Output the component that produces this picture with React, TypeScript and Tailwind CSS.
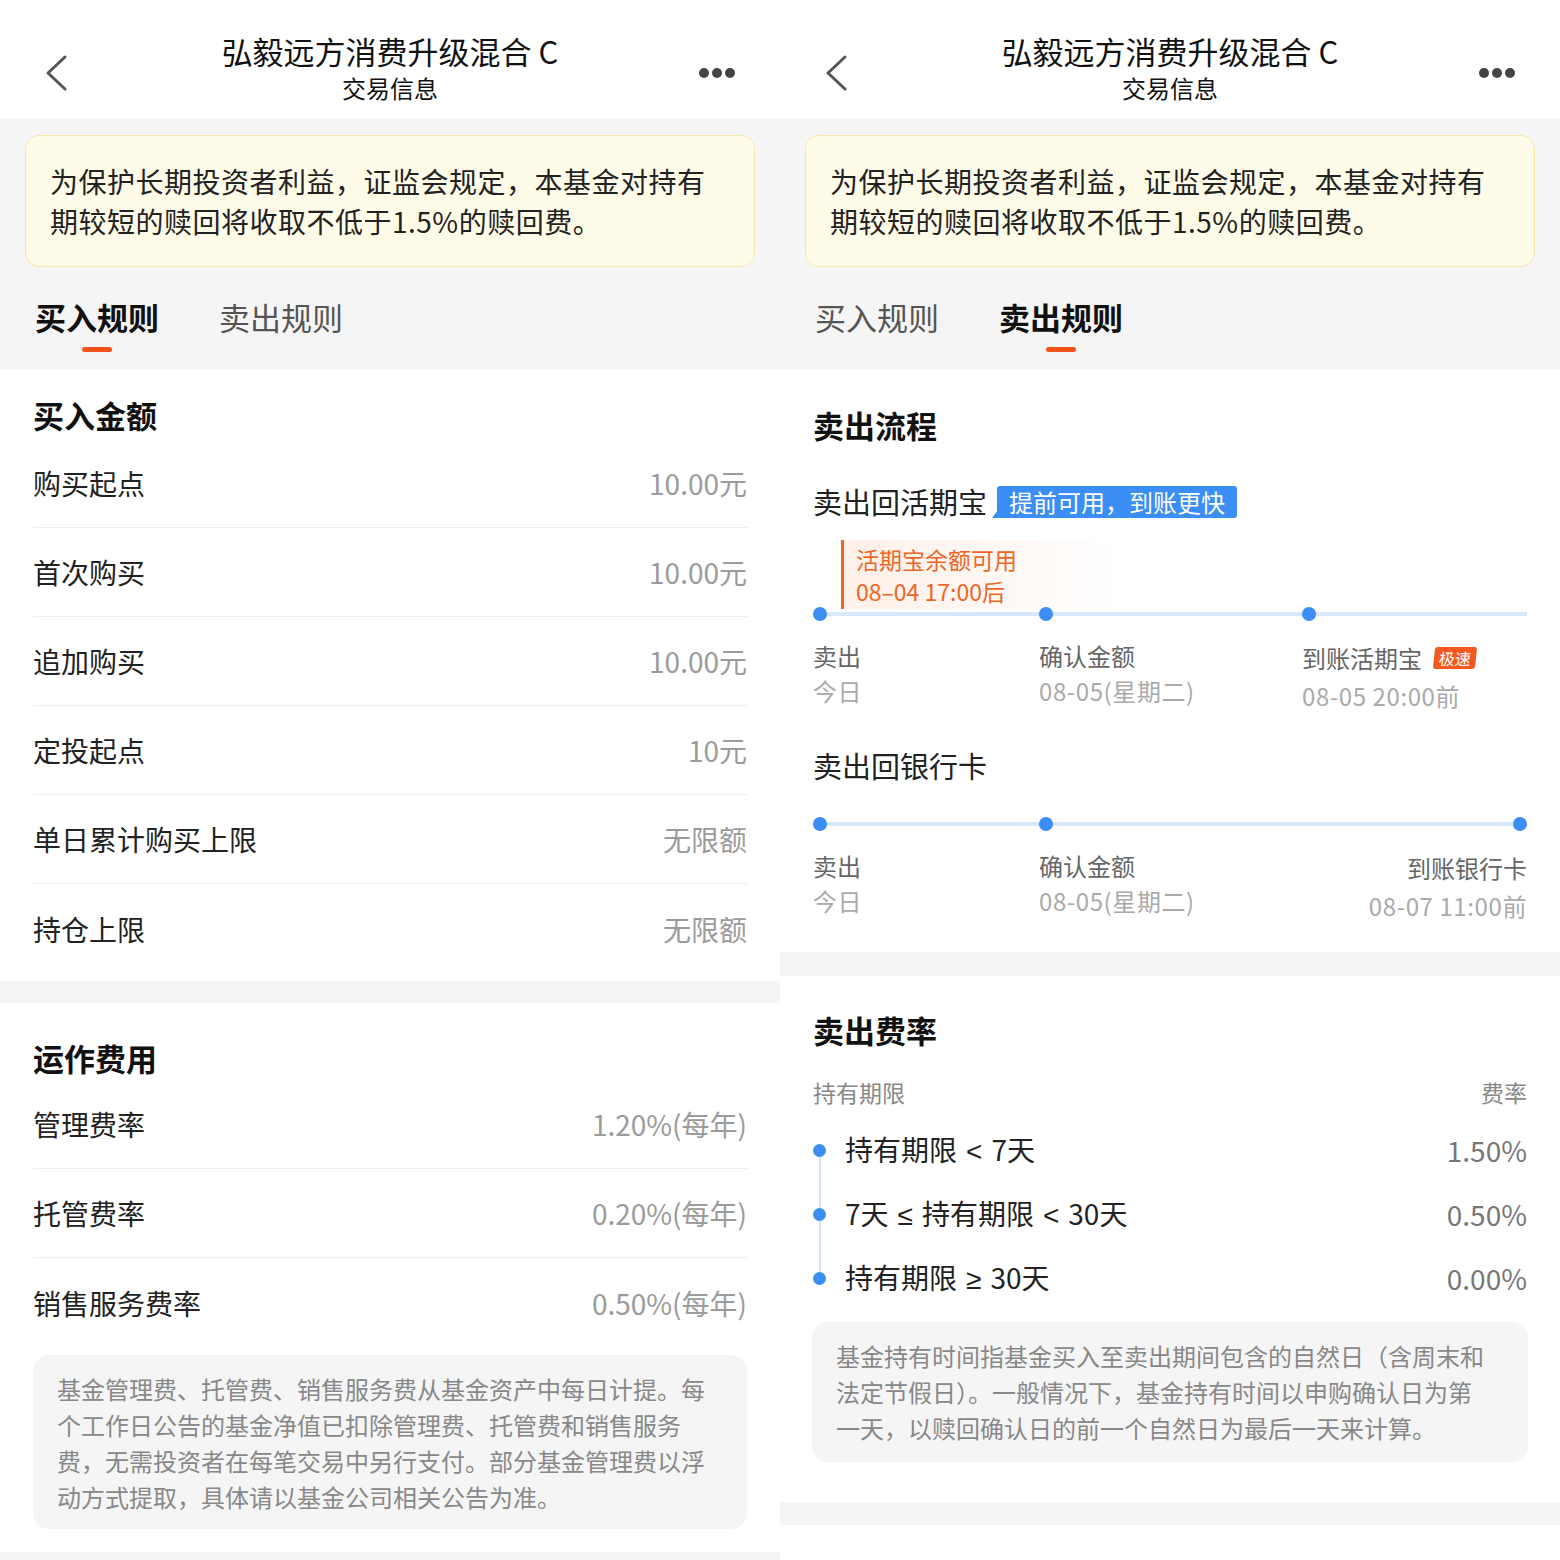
import React from 'react';

const FONT = "font-['Noto_Sans_CJK_SC','Noto_Sans',sans-serif]";

function Header() {
  return (
    <div className="flex h-[118px] bg-white">
      <div className="w-[120px] pl-[44px] pt-[53px]">
        <svg width="26" height="40" viewBox="0 0 26 40">
          <path d="M21 4 L4 20 L21 36" stroke="#555" strokeWidth="3" fill="none" strokeLinecap="round" strokeLinejoin="round" />
        </svg>
      </div>
      <div className="flex flex-1 flex-col items-center pt-[32px] text-[#111]">
        <div className="text-[31px] leading-[38px]">弘毅远方消费升级混合 C</div>
        <div className="text-[24px] leading-[36px]">交易信息</div>
      </div>
      <div className="flex w-[120px] gap-[3px] pl-[39px] pt-[68px]">
        <span className="h-[10px] w-[10px] rounded-full bg-[#444]" />
        <span className="h-[10px] w-[10px] rounded-full bg-[#444]" />
        <span className="h-[10px] w-[10px] rounded-full bg-[#444]" />
      </div>
    </div>
  );
}

function Tab({ label, active }: { label: string; active?: boolean }) {
  return (
    <div className="flex flex-col items-center">
      <div className={`text-[31px] leading-[40px] ${active ? 'font-bold text-[#111]' : 'text-[#555]'}`}>{label}</div>
      <div className={`mt-[10px] h-[5px] w-[30px] rounded-full ${active ? 'bg-[#f2531c]' : 'bg-transparent'}`} />
    </div>
  );
}

function TopArea({ sell }: { sell?: boolean }) {
  return (
    <div className="bg-[#f5f5f5] px-[25px] pt-[17px]">
      <div className="rounded-[14px] border-[1.5px] border-[#f6e6ab] bg-[#fffbe9] py-[25px] pl-[24px] pr-[16px] text-[28px] leading-[40px] tracking-[0.5px] text-[#222]">
        为保护长期投资者利益，证监会规定，本基金对持有
        <br />
        期较短的赎回将收取不低于1.5%的赎回费。
      </div>
      <div className="flex gap-[60px] pb-[18px] pl-[10px] pt-[30px]">
        <Tab label="买入规则" active={!sell} />
        <Tab label="卖出规则" active={sell} />
      </div>
    </div>
  );
}

function Row({ label, value, last }: { label: string; value: string; last?: boolean }) {
  return (
    <div className={`flex h-[89px] items-center justify-between ${last ? '' : 'border-b border-[#eeeeee]'}`}>
      <span className="text-[28px] text-[#222]">{label}</span>
      <span className="text-[28px] text-[#9b9b9b]">{value}</span>
    </div>
  );
}

const buyRows = [
  ['购买起点', '10.00元'],
  ['首次购买', '10.00元'],
  ['追加购买', '10.00元'],
  ['定投起点', '10元'],
  ['单日累计购买上限', '无限额'],
  ['持仓上限', '无限额'],
];

const feeRows = [
  ['管理费率', '1.20%(每年)'],
  ['托管费率', '0.20%(每年)'],
  ['销售服务费率', '0.50%(每年)'],
];

function BuyPanel() {
  return (
    <div className="flex h-[1560px] w-[780px] flex-col overflow-hidden bg-white">
      <Header />
      <TopArea />
      <div className="px-[33px] pb-[8px] pt-[25px]">
        <div className="text-[31px] font-bold leading-[40px] text-[#111]">买入金额</div>
        <div className="mt-[4px]">
          {buyRows.map(([l, v], i) => (
            <Row key={l} label={l} value={v} last={i === buyRows.length - 1} />
          ))}
        </div>
      </div>
      <div className="h-[22px] bg-[#f5f5f5]" />
      <div className="px-[33px] pt-[35px]">
        <div className="text-[31px] font-bold leading-[40px] text-[#111]">运作费用</div>
        <div className="mt-[2px]">
          {feeRows.map(([l, v], i) => (
            <Row key={l} label={l} value={v} last={i === feeRows.length - 1} />
          ))}
        </div>
        <div className="mt-[8px] rounded-[16px] bg-[#f5f5f5] px-[24px] pb-[14px] pt-[16px] text-[24px] leading-[36px] text-[#888]">
          基金管理费、托管费、销售服务费从基金资产中每日计提。每
          <br />
          个工作日公告的基金净值已扣除管理费、托管费和销售服务
          <br />
          费，无需投资者在每笔交易中另行支付。部分基金管理费以浮
          <br />
          动方式提取，具体请以基金公司相关公告为准。
        </div>
      </div>
      <div className="h-[23px] bg-white" />
      <div className="flex-1 bg-[#f5f5f5]" />
    </div>
  );
}

function Dot() {
  return <span className="relative block h-[14px] w-[14px] rounded-full bg-[#3a8ef5]" />;
}

type Step = { top: React.ReactNode; bottom: string };

function Timeline({ steps, endRight }: { steps: Step[]; endRight?: boolean }) {
  return (
    <div className="relative">
      <div className="absolute left-[7px] right-0 top-[5px] h-[4px] bg-[#d8e7fc]" />
      <div className="grid grid-cols-[226px_263px_1fr]">
        {steps.map((s, i) => {
          const right = endRight && i === 2;
          return (
            <div key={i} className={`flex flex-col ${right ? 'items-end text-right' : 'items-start'}`}>
              <Dot />
              <div className={`mt-[17px] flex items-center text-[24px] text-[#666] ${i === 2 ? 'h-[40px]' : 'h-[35px]'}`}>{s.top}</div>
              <div className="text-[24px] leading-[35px] tracking-[0.6px] text-[#aaa]">{s.bottom}</div>
            </div>
          );
        })}
      </div>
    </div>
  );
}

const SYM = "inline-block mx-[9px] font-['Liberation_Sans',sans-serif] text-[28px]";

const rateRows: [React.ReactNode, string][] = [
  [
    <>
      持有期限<span className={SYM}>&lt;</span>7天
    </>,
    '1.50%',
  ],
  [
    <>
      7天<span className={SYM}>≤</span>持有期限<span className={SYM}>&lt;</span>30天
    </>,
    '0.50%',
  ],
  [
    <>
      持有期限<span className={SYM}>≥</span>30天
    </>,
    '0.00%',
  ],
];

function SellPanel() {
  return (
    <div className="flex h-[1560px] w-[780px] flex-col overflow-hidden bg-white">
      <Header />
      <TopArea sell />
      <div className="px-[33px] pb-[29px] pt-[35px]">
        <div className="text-[31px] font-bold leading-[40px] text-[#111]">卖出流程</div>
        <div className="mt-[37px] flex h-[40px] items-center">
          <span className="text-[29px] text-[#222]">卖出回活期宝</span>
          <span className="relative ml-[10px] h-[32px] rounded-[3px] bg-[#3a8ef5] px-[12px] text-[24px] leading-[32px] text-white">
            <span className="absolute bottom-0 left-[-5px] h-0 w-0 border-r-[6px] border-t-[8px] border-r-[#3a8ef5] border-t-transparent" />
            提前可用，到账更快
          </span>
        </div>
        <div className="ml-[28px] mt-[18px] h-[69px] w-[280px] border-l-[3px] border-[#f06525] bg-linear-to-r from-[#fff0e8] to-white pl-[12px] pt-[3px] text-[23px] leading-[32px] text-[#f06525]">
          <div>活期宝余额可用</div>
          <div>08–04 17:00后</div>
        </div>
        <div className="-mt-[2px]">
          <Timeline
            steps={[
              { top: '卖出', bottom: '今日' },
              { top: '确认金额', bottom: '08-05(星期二)' },
              {
                top: (
                  <>
                    到账活期宝
                    <span className="ml-[12px] -skew-x-6 rounded-[3px] bg-[#f5581e] px-[5px] text-[16px] leading-[22px] text-white">极速</span>
                  </>
                ),
                bottom: '08-05 20:00前',
              },
            ]}
          />
        </div>
        <div className="mt-[32px] text-[29px] leading-[40px] text-[#222]">卖出回银行卡</div>
        <div className="mt-[32px]">
          <Timeline
            endRight
            steps={[
              { top: '卖出', bottom: '今日' },
              { top: '确认金额', bottom: '08-05(星期二)' },
              { top: '到账银行卡', bottom: '08-07 11:00前' },
            ]}
          />
        </div>
      </div>
      <div className="h-[24px] bg-[#f5f5f5]" />
      <div className="px-[33px] pt-[34px]">
        <div className="text-[31px] font-bold leading-[40px] text-[#111]">卖出费率</div>
        <div className="mt-[25px] flex justify-between text-[23px] leading-[34px] text-[#888]">
          <span>持有期限</span>
          <span>费率</span>
        </div>
        <div className="relative mt-[9px]">
          <div className="absolute bottom-[32px] left-[6px] top-[32px] w-[2px] bg-[#d3e3fb]" />
          {rateRows.map(([l, v], i) => (
            <div key={i} className="flex h-[64px] items-center">
              <span className="relative h-[13px] w-[13px] rounded-full bg-[#3a8ef5]" />
              <span className="ml-[19px] flex-1 text-[28px] text-[#222]">{l}</span>
              <span className="text-[28px] text-[#777]">{v}</span>
            </div>
          ))}
        </div>
        <div className="-mx-[1px] mt-[12px] rounded-[16px] bg-[#f5f5f5] px-[24px] py-[16px] text-[24px] leading-[36px] text-[#888]">
          基金持有时间指基金买入至卖出期间包含的自然日（含周末和
          <br />
          法定节假日）。一般情况下，基金持有时间以申购确认日为第
          <br />
          一天，以赎回确认日的前一个自然日为最后一天来计算。
        </div>
      </div>
      <div className="h-[40px] bg-white" />
      <div className="h-[23px] bg-[#f5f5f5]" />
      <div className="flex-1 bg-white" />
    </div>
  );
}

export default function App() {
  return (
    <div className={`flex w-[1560px] bg-white ${FONT}`}>
      <BuyPanel />
      <SellPanel />
    </div>
  );
}
